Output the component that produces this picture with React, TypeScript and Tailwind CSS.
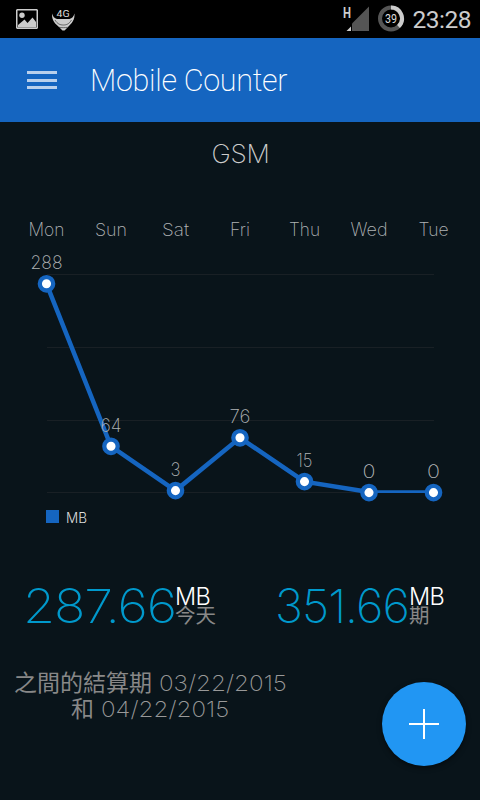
const display = "font-['Inter','Noto_Sans_CJK_TC',sans-serif]";

const points = [
  { day: 'Mon', value: '288', x: 46.5, y: 283.8, w: 36, vw: 32 },
  { day: 'Sun', value: '64', x: 111, y: 446.3, w: 32, vw: 21 },
  { day: 'Sat', value: '3', x: 175.5, y: 490.6, w: 27, vw: 10 },
  { day: 'Fri', value: '76', x: 240, y: 437.8, w: 20, vw: 21 },
  { day: 'Thu', value: '15', x: 304.5, y: 481.6, w: 31, vw: 16 },
  { day: 'Wed', value: '0', x: 369, y: 492.6, w: 37, vw: 13 },
  { day: 'Tue', value: '0', x: 433.5, y: 492.6, w: 30, vw: 13 },
];

function StatusBar() {
  return (
    <div className="flex h-[38px] items-center bg-black text-[#cccccc]">
      <svg className="ml-4 block" width="22" height="21" viewBox="0 0 22 21">
        <path fillRule="evenodd" fill="#cccccc" d="M1 0h20l1 1v18l-1 1H1l-1-1V1zM1.500 1.500v17h19v-17z" />
        <circle cx="6" cy="6.3" r="2.7" fill="#cccccc" />
        <path fill="#cccccc" d="M2 18.500v-2.500l6.500-5.500 3 3.500 5-5.500 3.500 4.500v5.500z" />
      </svg>
      <svg className="ml-[14px] block" width="23" height="24" viewBox="0 0 23 24">
        <path fill="#cccccc" d="M0 6.500C.8 9.500 2.500 11.500 5 12h12.500c2.500-.5 4.200-2.500 5-5.500.3 4-1 7-2.800 9.500L16 20l-3.500 3.500h-2L7 20l-3.800-3.500C1 14 -.3 10.500 0 6.500z" />
        <path fill="none" stroke="#222" strokeWidth="0.6" d="M3 13c2.500 4 5 5 8.300 5s5.700-1 8.200-5M7 20.300c2 .5 6.500.5 8.500 0" />
        <text x="4.500" y="9.500" fontSize="9.5" fill="#dddddd" fontFamily="Roboto" textLength="13" lengthAdjust="spacingAndGlyphs">4G</text>
      </svg>
      <svg className="ml-auto block" width="28" height="28" viewBox="0 0 28 28">
        <text x="1" y="13" fontSize="14" fontWeight="700" fill="#cccccc" fontFamily="Roboto" textLength="8" lengthAdjust="spacingAndGlyphs">H</text>
        <path d="M10 26V18.500L27 1.500V26z" fill="#555555" />
        <path d="M4.500 26 9 21.500V26z" fill="#cccccc" />
      </svg>
      <svg className="ml-[7px] block" width="28" height="28" viewBox="0 0 28 28">
        <circle cx="14" cy="13.5" r="11" fill="none" stroke="#555555" strokeWidth="4" />
        <path d="M14 2.500A11 11 0 0 1 21.500 21.500" fill="none" stroke="#cccccc" strokeWidth="4" />
        <text x="8" y="18.2" fontSize="13" fill="#dddddd" fontFamily="Roboto" textLength="12" lengthAdjust="spacingAndGlyphs">39</text>
      </svg>
      <span className="ml-[7px] mr-[9px] mt-[2px] font-['Roboto',sans-serif] text-[24.500px] leading-none tracking-[-0.5px]">23:28</span>
    </div>
  );
}

function Header() {
  return (
    <header className="flex h-[84px] items-center bg-[#1565c0]">
      <div className="ml-[27px] flex w-[30px] flex-col gap-[4.500px]">
        <i className="h-[3px] bg-[#b9d0ec]" />
        <i className="h-[3px] bg-[#b9d0ec]" />
        <i className="h-[3px] bg-[#b9d0ec]" />
      </div>
      <h1 className="ml-[33px] mt-[2px] font-['Roboto',sans-serif] text-[30.500px] font-extralight leading-none tracking-[-0.300px] text-white">Mobile Counter</h1>
    </header>
  );
}

function Chart() {
  return (
    <svg className="block" width="480" height="330" viewBox="0 210 480 330" fontFamily="Inter, sans-serif" fontWeight="200">
      {[274.5, 347.5, 420.5, 492.5].map((y) => (
        <path key={y} d={`M47 ${y}H434`} stroke="#192025" />
      ))}
      <path d="M46.500 283.800 111 446.300 175.500 490.600 240 437.800 304.500 481.600 369 492" fill="none" stroke="#1565c0" strokeWidth="4.5" />
      <path d="M369 491.600H433.500" stroke="#1565c0" strokeWidth="2.7" />
      {points.map((p) => (
        <g key={p.day}>
          <circle cx={p.x} cy={p.y} r="6.7" fill="white" stroke="#1565c0" strokeWidth="4.3" />
          <text x={p.x - p.w / 2} y="236" fontSize="18" fill="#b0b3b5" textLength={p.w} lengthAdjust="spacingAndGlyphs">{p.day}</text>
          <text x={p.x - p.vw / 2} y={p.y - 14.5} fontSize="18.5" fill="#b0b3b5" textLength={p.vw} lengthAdjust="spacingAndGlyphs">{p.value}</text>
        </g>
      ))}
      <rect x="46" y="510" width="13" height="13" fill="#1565c0" />
      <text x="66" y="523" fontSize="14" fontWeight="300" fill="#dddddd" textLength="21" lengthAdjust="spacingAndGlyphs">MB</text>
    </svg>
  );
}

function Total({ amount, label, className, amountClass }: { amount: string; label: string; className: string; amountClass: string }) {
  return (
    <div className={`flex items-start ${className}`}>
      <span className={`block w-[152px] origin-left tracking-[-0.950px] ${amountClass}`}>{amount}</span>
      <div className="flex flex-col pt-[9px]">
        <span className="text-[23.500px] font-light leading-[19px] tracking-[-0.700px] text-white">MB</span>
        <span className="text-[20.500px] font-normal leading-[19px] text-[#888888]">{label}</span>
      </div>
    </div>
  );
}

export default function App() {
  return (
    <div className={`flex h-[800px] w-[480px] flex-col overflow-hidden bg-[#09141a] ${display}`}>
      <StatusBar />
      <Header />
      <h2 className="flex h-[88px] justify-center pl-px pt-[16px] text-[26px] font-extralight leading-[32px] tracking-[-0.300px] text-[#cccccc]">GSM</h2>
      <Chart />
      <div className="flex h-[115px] pt-[38px] text-[47px] font-extralight leading-[56px] text-[#0099cc]">
        <Total amount="287.66" label="今天" className="ml-[23px] w-[252px]" amountClass="scale-x-[1.105]" />
        <Total amount="351.66" label="期" className="" amountClass="max-w-[134px]" />
      </div>
      <div className="flex items-start">
        <p className="ml-[14px] mt-[15px] w-[274px] text-center text-[22px] font-extralight leading-[26px] text-[#999999]">
          <span className="flex items-center justify-between">
            <span className="text-[23px] font-normal text-[#888888]">之間的結算期</span>
            <span className="block w-[129px] whitespace-nowrap text-left"><span className="inline-block origin-left scale-x-[1.100]">03/22/2015</span></span>
          </span>
          <span className="flex items-center justify-between pl-[57px]">
            <span className="text-[23px] font-normal text-[#888888]">和</span>
            <span className="block w-[187px] whitespace-nowrap text-left"><span className="inline-block origin-left scale-x-[1.100]">04/22/2015</span></span>
          </span>
        </p>
        <button className="ml-auto mr-[14px] mt-[27px] flex size-[84px] items-center justify-center rounded-full bg-[#2196f3] shadow-[0_2px_5px_rgba(0,0,0,0.5)]">
          <svg width="30" height="30" viewBox="0 0 30 30" stroke="white" strokeWidth="2">
            <path d="M15 0V30M0 15H30" />
          </svg>
        </button>
      </div>
    </div>
  );
}
